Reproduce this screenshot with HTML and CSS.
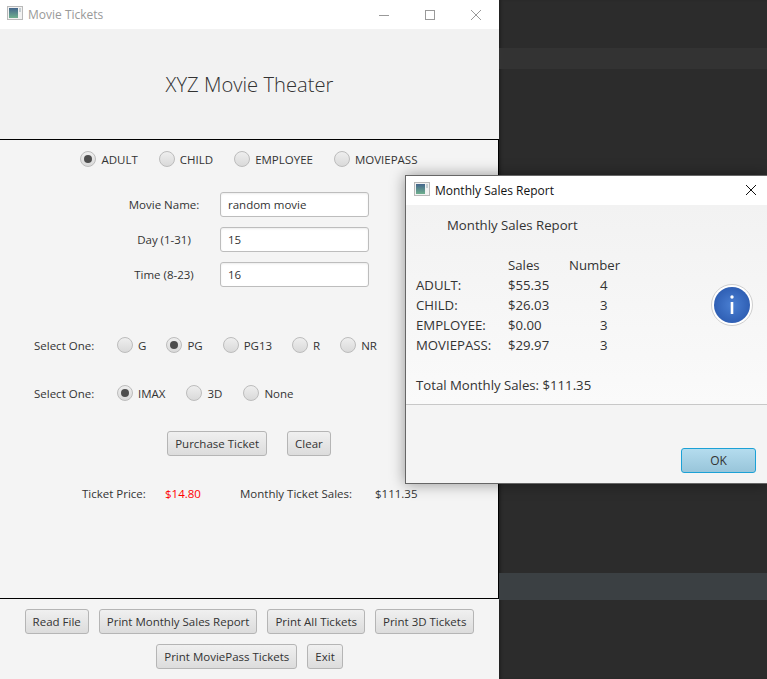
FILE: index.html
```html
<!DOCTYPE html>
<html lang="en">
<head>
  <meta charset="UTF-8">
  <title>Movie Tickets</title>
  <link rel="stylesheet" href="styles.css">
</head>
<body>
  <div class="desktop">
    <div class="window">
      <div class="titlebar">
        <svg class="app-icon" width="16" height="14" viewBox="0 0 16 14">
          <defs>
            <linearGradient id="appPic" x1="0" y1="0" x2="0" y2="1">
              <stop offset="0" stop-color="#44668c"/>
              <stop offset="1" stop-color="#6fb08e"/>
            </linearGradient>
          </defs>
          <rect x="0.5" y="0.5" width="15" height="13" fill="#f2f2f2" stroke="#b9b9b9"/>
          <rect x="2" y="2" width="9" height="10" fill="url(#appPic)"/>
          <rect x="12" y="2" width="2" height="4" fill="#c4ced2"/>
        </svg>
        <span class="title-text">Movie Tickets</span>
        <div class="controls">
          <svg width="12" height="12" viewBox="0 0 12 12"><path d="M1 6.5h10" stroke="#999" fill="none"/></svg>
          <svg width="12" height="12" viewBox="0 0 12 12"><rect x="1.5" y="1.5" width="9" height="9" stroke="#999" fill="none"/></svg>
          <svg width="12" height="12" viewBox="0 0 12 12"><path d="M1 1l10 10M11 1L1 11" stroke="#999" fill="none"/></svg>
        </div>
      </div>

      <div class="banner">XYZ Movie Theater</div>

      <div class="center-box">
        <div class="radio-row ticket-types">
          <label class="radio-item"><span class="radio checked"></span>ADULT</label>
          <label class="radio-item"><span class="radio"></span>CHILD</label>
          <label class="radio-item"><span class="radio"></span>EMPLOYEE</label>
          <label class="radio-item"><span class="radio"></span>MOVIEPASS</label>
        </div>

        <div class="form-grid">
          <span class="form-label">Movie Name:</span>
          <div class="text-field">random movie</div>
          <span class="form-label">Day (1-31)</span>
          <div class="text-field">15</div>
          <span class="form-label">Time (8-23)</span>
          <div class="text-field">16</div>
        </div>

        <div class="select-row rating-row">
          <span class="select-label">Select One:</span>
          <label class="radio-item"><span class="radio"></span>G</label>
          <label class="radio-item"><span class="radio checked"></span>PG</label>
          <label class="radio-item"><span class="radio"></span>PG13</label>
          <label class="radio-item"><span class="radio"></span>R</label>
          <label class="radio-item"><span class="radio"></span>NR</label>
        </div>

        <div class="select-row format-row">
          <span class="select-label">Select One:</span>
          <label class="radio-item"><span class="radio checked"></span>IMAX</label>
          <label class="radio-item"><span class="radio"></span>3D</label>
          <label class="radio-item"><span class="radio"></span>None</label>
        </div>

        <div class="button-row">
          <button class="fx-button">Purchase Ticket</button>
          <button class="fx-button">Clear</button>
        </div>

        <div class="info-row">
          <span class="info-price-label">Ticket Price:</span>
          <span class="info-price">$14.80</span>
          <span class="info-sales-label">Monthly Ticket Sales:</span>
          <span>$111.35</span>
        </div>
      </div>

      <div class="bottom-bar">
        <button class="fx-button">Read File</button>
        <button class="fx-button">Print Monthly Sales Report</button>
        <button class="fx-button">Print All Tickets</button>
        <button class="fx-button">Print 3D Tickets</button>
        <button class="fx-button">Print MoviePass Tickets</button>
        <button class="fx-button">Exit</button>
      </div>
    </div>

    <div class="editor">
      <div class="editor-line"></div>
      <div class="editor-line current"></div>
    </div>

    <div class="dialog">
      <div class="dialog-titlebar">
        <svg class="app-icon" width="16" height="14" viewBox="0 0 16 14">
          <rect x="0.5" y="0.5" width="15" height="13" fill="#f2f2f2" stroke="#b9b9b9"/>
          <rect x="2" y="2" width="9" height="10" fill="url(#appPic)"/>
          <rect x="12" y="2" width="2" height="4" fill="#c4ced2"/>
        </svg>
        <span class="dialog-title">Monthly Sales Report</span>
        <svg class="dialog-close" width="12" height="12" viewBox="0 0 12 12"><path d="M1 1l10 10M11 1L1 11" stroke="#111" fill="none"/></svg>
      </div>

      <div class="dialog-content">
        <div class="dialog-heading">Monthly Sales Report</div>
        <div class="report-body">
          <div class="report-grid">
            <span></span><span>Sales</span><span>Number</span>
            <span>ADULT:</span><span>$55.35</span><span class="count">4</span>
            <span>CHILD:</span><span>$26.03</span><span class="count">3</span>
            <span>EMPLOYEE:</span><span>$0.00</span><span class="count">3</span>
            <span>MOVIEPASS:</span><span>$29.97</span><span class="count">3</span>
          </div>
          <svg class="info-icon" width="44" height="44" viewBox="0 0 44 44">
            <defs>
              <radialGradient id="infoBlue">
                <stop offset="0" stop-color="#4a7fd2"/>
                <stop offset="1" stop-color="#2f5fb4"/>
              </radialGradient>
            </defs>
            <circle cx="22" cy="22" r="20.5" fill="#fff" stroke="#cfcfcf"/>
            <circle cx="22" cy="22" r="18" fill="url(#infoBlue)"/>
            <circle cx="22" cy="14" r="1.7" fill="#fff"/>
            <rect x="20.7" y="19" width="2.6" height="12" fill="#fff"/>
          </svg>
        </div>
        <div class="report-total">Total Monthly Sales: $111.35</div>
      </div>

      <div class="dialog-footer">
        <button class="fx-button ok-button">OK</button>
      </div>
    </div>
  </div>
</body>
</html>
```

FILE: styles.css
```css
html, body {
  margin: 0;
  padding: 0;
}
body {
  font-family: "Open Sans", "Noto Sans", sans-serif;
  font-size: 11.5px;
  color: #333;
}
.desktop {
  position: relative;
  display: flex;
  width: 767px;
  height: 679px;
  overflow: hidden;
  background-color: #2c2c2c;
}
.window {
  display: flex;
  flex-direction: column;
  width: 499px;
  background-color: #f4f4f4;
  flex-shrink: 0;
}
.titlebar {
  display: flex;
  align-items: center;
  height: 29px;
  padding-left: 7px;
  background-color: #fff;
}
.app-icon {
  flex-shrink: 0;
  margin-bottom: 3px;
}
.title-text {
  margin-left: 5px;
  font-size: 12px;
  color: #999;
}
.controls {
  display: flex;
  gap: 34px;
  margin-left: auto;
  margin-right: 17px;
}
.banner {
  height: 110px;
  line-height: 110px;
  text-align: center;
  font-size: 20.2px;
  font-weight: 300;
  background-color: #f2f2f2;
}
.center-box {
  height: 458px;
  border: 1px solid #000;
  border-left: none;
}
.radio-row {
  display: flex;
  justify-content: center;
  gap: 21px;
  height: 16px;
  margin-top: 11px;
}
.radio-item {
  display: flex;
  align-items: center;
  gap: 5px;
}
.radio {
  box-sizing: border-box;
  display: block;
  position: relative;
  width: 16px;
  height: 16px;
  border: 1px solid #bcbcbc;
  border-radius: 50%;
  background: linear-gradient(#eeeeee, #d9d9d9);
}
.radio.checked::after {
  content: "";
  position: absolute;
  left: 3px;
  top: 3px;
  width: 8px;
  height: 8px;
  border-radius: 50%;
  background-color: #4d4d4d;
}
.form-grid {
  display: grid;
  grid-template-columns: 112px 149px;
  grid-auto-rows: 25px;
  row-gap: 10px;
  align-items: center;
  margin-top: 25px;
  padding-left: 108px;
}
.form-label {
  text-align: center;
  padding-bottom: 1px;
}
.text-field {
  box-sizing: border-box;
  height: 25px;
  line-height: 23px;
  padding-left: 7px;
  border: 1px solid #bdbdbd;
  border-radius: 3px;
  background-color: #fff;
  box-shadow: inset 0 1px 2px rgba(0, 0, 0, 0.08);
}
.select-row {
  display: flex;
  align-items: center;
  gap: 21px;
  height: 16px;
  padding-left: 34px;
}
.rating-row {
  gap: 20px;
  margin-top: 50px;
}
.rating-row .select-label {
  margin-right: 1px;
}
.format-row {
  margin-top: 32px;
}
.select-label {
  width: 62px;
}
.button-row {
  display: flex;
  justify-content: center;
  gap: 20px;
  margin-top: 30px;
}
.fx-button {
  box-sizing: border-box;
  height: 25px;
  padding: 0 7px;
  border: 1px solid #b5b5b5;
  border-radius: 3px;
  background: linear-gradient(#f0f0f0, #dcdcdc);
  color: #333;
  font-family: inherit;
  font-size: inherit;
}
.info-row {
  display: flex;
  align-items: center;
  height: 16px;
  margin-top: 29px;
  padding-left: 82px;
}
.info-price-label {
  width: 83px;
}
.info-price {
  width: 75px;
  color: #ff0000;
}
.info-sales-label {
  width: 135px;
}
.bottom-bar {
  display: flex;
  flex-wrap: wrap;
  justify-content: center;
  gap: 10px;
  padding-top: 10px;
}
.editor {
  flex: 1;
  padding-top: 48px;
  box-shadow: inset 3px 0 3px -1px rgba(0, 0, 0, 0.25);
}
.editor-line {
  height: 21px;
  background-color: #333;
}
.editor-line.current {
  height: 27px;
  margin-top: 504px;
  background-color: #3b4043;
}
.dialog {
  position: absolute;
  left: 405px;
  top: 175px;
  width: 362px;
  height: 309px;
  box-sizing: border-box;
  display: flex;
  flex-direction: column;
  border: 1px solid #666;
  border-right: none;
  background-color: #f4f4f4;
  box-shadow: 0 0 14px rgba(0, 0, 0, 0.4);
}
.dialog-titlebar {
  display: flex;
  align-items: center;
  height: 29px;
  padding-left: 8px;
  padding-bottom: 1px;
  box-sizing: border-box;
  background-color: #fff;
}
.dialog-title {
  margin-left: 5px;
  font-size: 12px;
  color: #111;
}
.dialog-close {
  margin-left: auto;
  margin-right: 10px;
}
.dialog-content {
  height: 200px;
  box-sizing: border-box;
  padding: 10px 10px 0;
  border-bottom: 1px solid #c8c8c8;
  font-size: 13.2px;
  background: linear-gradient(#f2f2f2, #fafafa);
}
.dialog-heading {
  height: 20px;
  line-height: 20px;
  padding-left: 31px;
}
.report-body {
  display: flex;
  justify-content: space-between;
  margin-top: 20px;
}
.report-grid {
  display: grid;
  grid-template-columns: 92px 61px 52px;
  grid-auto-rows: 20px;
  line-height: 20px;
}
.count {
  padding-left: 31px;
}
.info-icon {
  margin: 28px 3px 0 0;
}
.report-total {
  height: 20px;
  line-height: 20px;
  margin-top: 20px;
}
.dialog-footer {
  display: flex;
  justify-content: flex-end;
  flex: 1;
  padding: 43px 11px 0 0;
}
.ok-button {
  width: 75px;
  border-color: #1ba1d6;
  background: linear-gradient(#b4dcee, #98c5da);
  font-size: 12px;
}
```
